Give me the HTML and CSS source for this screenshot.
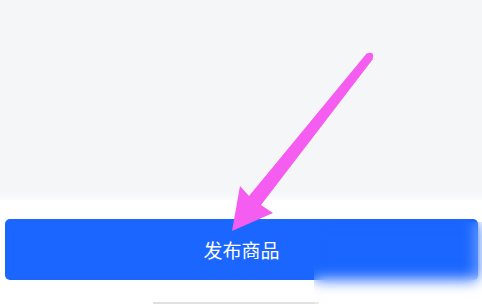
FILE: index.html
```html
<!DOCTYPE html>
<html lang="zh">
<head>
<meta charset="utf-8">
<link rel="stylesheet" href="styles.css">
</head>
<body>
<div class="page">
  <div class="content"></div>
  <div class="footer">
    <button class="publish">发布商品</button>
    <div class="divider"></div>
  </div>
  <svg class="arrow" width="482" height="304" viewBox="0 0 482 304">
    <polygon points="367,53 373,59 261,205 273,213 232,231 240,186 249,196" fill="#f55df0"/>
    <circle cx="370" cy="56" r="3.2" fill="#f55df0"/>
  </svg>
  <div class="blur"></div>
</div>
</body>
</html>
```
FILE: styles.css
```css
html, body {
  margin: 0;
  padding: 0;
  background: #ffffff;
}
.page {
  position: relative;
  width: 482px;
  height: 304px;
  overflow: hidden;
  display: flex;
  flex-direction: column;
  font-family: "Noto Sans CJK SC", "Noto Sans", sans-serif;
}
.content {
  height: 200px;
  background: linear-gradient(#f5f6f8 0, #f5f6f8 192px, #ffffff 206px);
  flex: none;
}
.footer {
  flex: 1;
  background: #ffffff;
  padding: 19px 4px 0 5px;
  display: flex;
  flex-direction: column;
}
.publish {
  height: 61px;
  border: none;
  border-radius: 5px;
  background: #1a66ff;
  color: #ffffff;
  font-family: "Noto Sans CJK SC", sans-serif;
  font-size: 19px;
  padding: 0;
  line-height: 1;
}
.divider {
  margin: 22px 0 0 148px;
  width: 166px;
  height: 2px;
  background: #e0e0e0;
}
.arrow {
  position: absolute;
  left: 0;
  top: 0;
}
.blur {
  position: absolute;
  left: 314px;
  top: 222px;
  width: 168px;
  height: 82px;
  backdrop-filter: blur(7px);
  -webkit-backdrop-filter: blur(7px);
}
```
